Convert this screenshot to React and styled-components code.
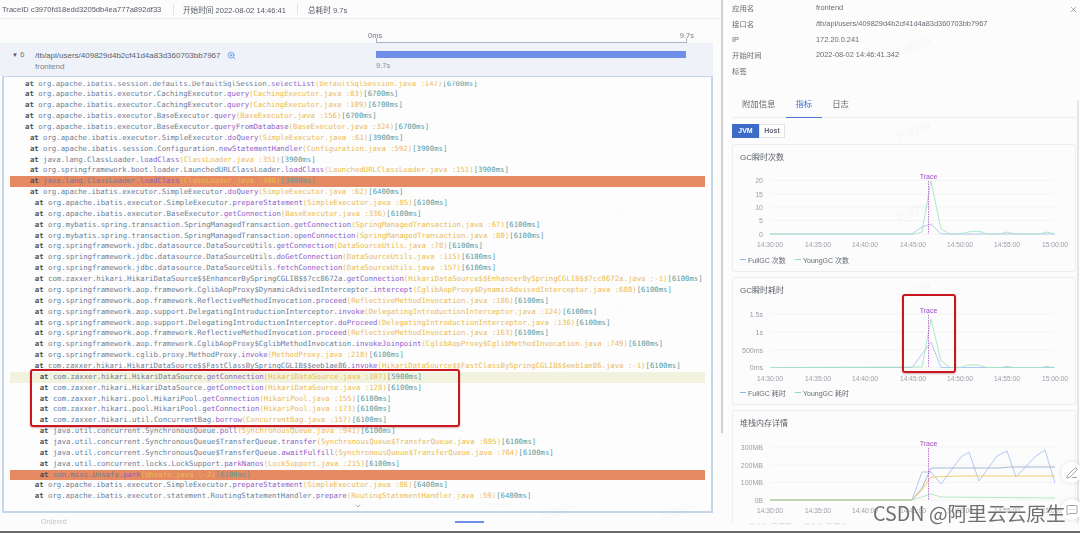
import React from "react";
import styled, { createGlobalStyle } from "styled-components";
import { PenLine, MessageSquareMore, ZoomIn, X, ChevronDown } from "lucide-react";

const UI_FONT = '"Liberation Sans", "Noto Sans CJK SC", sans-serif';

const GlobalStyle = createGlobalStyle`
  html, body {
    margin: 0;
    padding: 0;
    background: #fcfcfc;
    font-family: ${UI_FONT};
    overflow: hidden;
  }
`;

const Screen = styled.div`
  position: relative;
  width: 1080px;
  height: 533px;
  overflow: hidden;
  filter: blur(0.4px);
`;

const Main = styled.div`
  display: flex;
  height: 531px;
  overflow: hidden;
`;

const EdgeBar = styled.div`
  height: 2px;
  background: #6b6b6b;
`;

const Left = styled.div`
  width: 720px;
  flex: none;
  display: flex;
  flex-direction: column;
`;

const TopBar = styled.div`
  height: 18px;
  display: flex;
  align-items: center;
  padding-left: 2px;
  border-bottom: 1px solid #eeeeee;
  font-size: 7.6px;
  color: #555b66;
`;

const TopItem = styled.div`
  width: ${(p) => p.$width}px;
  flex: none;
  white-space: nowrap;
`;

const TopDivider = styled.div`
  width: 1px;
  height: 11px;
  background: #e3e3e3;
  margin-right: ${(p) => p.$gap}px;
  flex: none;
`;

const RulerRow = styled.div`
  height: 24px;
  display: flex;
  justify-content: space-between;
  align-items: center;
  padding: 8px 26px 0 368px;
  box-sizing: border-box;
  font-size: 7.5px;
  color: #777c85;
`;

const SpanRow = styled.div`
  position: relative;
  height: 33px;
  display: flex;
  background: #eff2f8;
  margin-right: 7px;
`;

const RulerLine = styled.div`
  position: absolute;
  left: 375.5px;
  top: -5px;
  width: 311px;
  height: 5px;
  box-sizing: border-box;
  border: 1px solid #a9b2c0;
  border-top: 0;
`;

const SpanInfo = styled.div`
  width: 376px;
  flex: none;
  display: flex;
  padding: 7px 0 0 12px;
  box-sizing: border-box;
`;

const Caret = styled.span`
  font-size: 6px;
  line-height: 10px;
  color: #555;
  width: 8px;
`;

const SpanCount = styled.span`
  width: 15px;
  font-size: 8px;
  line-height: 10px;
  color: #777;
`;

const SpanText = styled.div`
  font-size: 8px;
  line-height: 11px;
  color: #5a6170;
`;

const SpanPath = styled.div`
  display: flex;
  align-items: center;
  gap: 6px;
  white-space: nowrap;
`;

const SpanApp = styled.div`
  color: #80858e;
`;

const SpanBarCol = styled.div`
  padding-top: 8px;
  width: 310px;
`;

const SpanBar = styled.div`
  height: 7px;
  background: #6f8ee8;
`;

const SpanTime = styled.div`
  font-size: 7.5px;
  color: #8b9098;
  margin-top: 3px;
`;

const StackPanel = styled.div`
  position: relative;
  height: 437px;
  margin: 0 7px 0 2px;
  border: 1px solid #c6d5ea;
  border-width: 1px 2px 2px 2px;
  background: #fdfdfd;
  overflow: hidden;
  padding-top: 1.6px;
  box-sizing: border-box;
`;

const Fade = styled.div`
  position: absolute;
  left: 0;
  right: 0;
  height: ${(p) => p.$height}px;
  ${(p) => (p.$top ? "top: 0;" : "bottom: 0;")}
  background: linear-gradient(${(p) => (p.$top ? "to bottom" : "to top")}, #fdfdfd 40%, rgba(253, 253, 253, 0));
`;

const StackRow = styled.div`
  height: 10.87px;
  line-height: 10.87px;
  margin: 0 6px;
  padding-left: ${(p) => 15 + p.$level * 4.9}px;
  font-family: "DejaVu Sans Mono", "Liberation Mono", monospace;
  font-size: 7.3px;
  white-space: nowrap;
  background: ${(p) =>
    p.$mark === "slow" ? "#e58a63" : p.$mark === "focus" ? "#f1f3de" : "transparent"};
`;

const At = styled.span`
  color: #4c4f55;
  font-weight: bold;
`;

const Pkg = styled.span`
  color: #6c7d98;
`;

const Method = styled.span`
  color: #8d5fcb;
`;

const FileRef = styled.span`
  color: #ecbb4f;
`;

const Took = styled.span`
  color: #5a9aa0;
`;

const RedBox = styled.div`
  position: absolute;
  left: ${(p) => p.$left}px;
  top: ${(p) => p.$top}px;
  width: ${(p) => p.$width}px;
  height: ${(p) => p.$height}px;
  box-sizing: border-box;
  border: 2px solid #c9161f;
  border-radius: 3px;
  box-shadow: 0 1px 2px rgba(120, 0, 0, 0.3);
`;

const ScrollDown = styled.div`
  position: absolute;
  left: 354px;
  top: 502px;
  line-height: 0;
  color: #555;
`;

const LeftFoot = styled.div`
  position: relative;
  flex: 1;
  font-size: 7px;
  color: #c4c4c4;
  padding: 5px 0 0 41px;
`;

const FootMark = styled.div`
  position: absolute;
  left: 455px;
  top: 8px;
  width: 29px;
  height: 2px;
  background: #6f8ee8;
`;

const Right = styled.div`
  position: relative;
  flex: 1;
  padding: 0 4px 0 12px;
  min-width: 0;
  overflow: hidden;
`;

const RightFade = styled.div`
  position: absolute;
  left: 0;
  right: 0;
  bottom: 0;
  height: 10px;
  background: linear-gradient(to top, #fcfcfc 60%, rgba(252, 252, 252, 0));
`;

const Thumb = styled.div`
  position: absolute;
  top: ${(p) => p.$top}px;
  left: ${(p) => p.$left}px;
  width: 2px;
  height: ${(p) => p.$height}px;
  background: ${(p) => p.$color};
`;

const CloseButton = styled.div`
  position: absolute;
  right: 2px;
  top: 5px;
  color: #666;
  line-height: 0;
`;

const InfoRow = styled.div`
  display: grid;
  grid-template-columns: 84px 1fr;
  height: 15.7px;
  align-items: center;
  font-size: 7.4px;
  color: #666b74;
`;

const Tabs = styled.div`
  display: flex;
  height: 23px;
  margin-top: 16.5px;
  border-bottom: 1px solid #eeeeee;
  box-sizing: border-box;
`;

const Tab = styled.div`
  height: 23px;
  padding: 0 10px;
  box-sizing: border-box;
  font-size: 8.4px;
  line-height: 19px;
  color: ${(p) => (p.$active ? "#4a74cc" : "#666")};
  border-bottom: ${(p) => (p.$active ? "1px solid #4a74cc" : "0")};
`;

const ToggleGroup = styled.div`
  display: flex;
  margin-top: 6px;
  height: 14px;
`;

const Toggle = styled.div`
  width: ${(p) => p.$width}px;
  box-sizing: border-box;
  display: flex;
  align-items: center;
  justify-content: center;
  font-size: 7px;
  font-weight: bold;
  color: ${(p) => (p.$active ? "#fff" : "#667")};
  background: ${(p) => (p.$active ? "#3c6cc8" : "#fff")};
  border: 1px solid ${(p) => (p.$active ? "#3c6cc8" : "#e4e4e4")};
`;

const Card = styled.div`
  height: 128px;
  margin-top: ${(p) => p.$gap}px;
  box-sizing: border-box;
  border: 1px solid #eeeeee;
  border-radius: 2px;
  padding-top: 7px;
  width: 344px;
  flex: none;
`;

const CardTitle = styled.div`
  height: 12px;
  line-height: 12px;
  padding-left: 7px;
  font-size: 8px;
  color: #5a5f68;
`;

const ChartSvg = styled.svg`
  display: block;
  margin-left: -1px;
  font-family: ${UI_FONT};
`;

const Legend = styled.div`
  display: flex;
  height: 12px;
  align-items: center;
  margin-top: 2px;
  padding-left: 7px;
  font-size: 7px;
  color: #666b74;
`;

const LegendItem = styled.div`
  display: flex;
  align-items: center;
  gap: 2px;
  width: ${(p) => p.$width}px;
  white-space: nowrap;
  &::before {
    content: "";
    width: 6px;
    height: 1px;
    background: ${(p) => p.$color};
  }
`;

const FloatButton = styled.div`
  position: absolute;
  left: ${(p) => p.$left}px;
  top: ${(p) => p.$top}px;
  width: 21px;
  height: 21px;
  border-radius: 50%;
  background: #fff;
  box-shadow: 0 0 4px rgba(0, 0, 0, 0.12);
  display: flex;
  align-items: center;
  justify-content: center;
  color: #666;
`;

const WaterMark = styled.div`
  position: absolute;
  left: 873px;
  top: 500px;
  font-family: "Noto Sans CJK SC", "Noto Sans", sans-serif;
  font-size: 19.7px;
  line-height: 26px;
  color: #707070;
  text-shadow: 0 0 2px #fff;
  white-space: nowrap;
`;

const Tag = styled.div`
  position: absolute;
  font-size: 11px;
  color: rgba(0, 0, 0, 0.035);
  transform: rotate(-20deg);
  pointer-events: none;
`;

const FULL = "#a9c2f5";
const YOUNG = "#a8e4bf";
const X_TICKS = [
  [770, "14:30:00"],
  [818, "14:35:00"],
  [865, "14:40:00"],
  [913, "14:45:00"],
  [960, "14:50:00"],
  [1007, "14:55:00"],
  [1055, "15:00:00"],
];

const FRAME = "org.apache.ibatis.executor.";
const SPRING_JDBC = "org.springframework.jdbc.datasource.DataSourceUtils.";
const AOP = "org.springframework.aop.";
const HIKARI = "com.zaxxer.hikari.";
const CONC = "java.util.concurrent.";

const rows = [
  [0, "org.apache.ibatis.session.defaults.DefaultSqlSession.", "selectList", "DefaultSqlSession.java :147", "6700"],
  [0, FRAME + "CachingExecutor.", "query", "CachingExecutor.java :83", "6700"],
  [0, FRAME + "CachingExecutor.", "query", "CachingExecutor.java :109", "6700"],
  [0, FRAME + "BaseExecutor.", "query", "BaseExecutor.java :156", "6700"],
  [0, FRAME + "BaseExecutor.", "queryFromDatabase", "BaseExecutor.java :324", "6700"],
  [1, FRAME + "SimpleExecutor.", "doQuery", "SimpleExecutor.java :61", "3900"],
  [1, "org.apache.ibatis.session.Configuration.", "newStatementHandler", "Configuration.java :592", "3900"],
  [1, "java.lang.ClassLoader.", "loadClass", "ClassLoader.java :351", "3900"],
  [1, "org.springframework.boot.loader.LaunchedURLClassLoader.", "loadClass", "LaunchedURLClassLoader.java :151", "3900"],
  [1, "java.lang.ClassLoader.", "loadClass", "ClassLoader.java :398", "3900", "slow"],
  [1, FRAME + "SimpleExecutor.", "doQuery", "SimpleExecutor.java :62", "6400"],
  [2, FRAME + "SimpleExecutor.", "prepareStatement", "SimpleExecutor.java :85", "6100"],
  [2, FRAME + "BaseExecutor.", "getConnection", "BaseExecutor.java :336", "6100"],
  [2, "org.mybatis.spring.transaction.SpringManagedTransaction.", "getConnection", "SpringManagedTransaction.java :67", "6100"],
  [2, "org.mybatis.spring.transaction.SpringManagedTransaction.", "openConnection", "SpringManagedTransaction.java :80", "6100"],
  [2, SPRING_JDBC, "getConnection", "DataSourceUtils.java :78", "6100"],
  [2, SPRING_JDBC, "doGetConnection", "DataSourceUtils.java :115", "6100"],
  [2, SPRING_JDBC, "fetchConnection", "DataSourceUtils.java :157", "6100"],
  [2, HIKARI + "HikariDataSource$$EnhancerBySpringCGLIB$$7cc8672a.", "getConnection", "HikariDataSource$$EnhancerBySpringCGLIB$$7cc8672a.java :-1", "6100"],
  [2, AOP + "framework.CglibAopProxy$DynamicAdvisedInterceptor.", "intercept", "CglibAopProxy$DynamicAdvisedInterceptor.java :688", "6100"],
  [2, AOP + "framework.ReflectiveMethodInvocation.", "proceed", "ReflectiveMethodInvocation.java :186", "6100"],
  [2, AOP + "support.DelegatingIntroductionInterceptor.", "invoke", "DelegatingIntroductionInterceptor.java :124", "6100"],
  [2, AOP + "support.DelegatingIntroductionInterceptor.", "doProceed", "DelegatingIntroductionInterceptor.java :136", "6100"],
  [2, AOP + "framework.ReflectiveMethodInvocation.", "proceed", "ReflectiveMethodInvocation.java :163", "6100"],
  [2, AOP + "framework.CglibAopProxy$CglibMethodInvocation.", "invokeJoinpoint", "CglibAopProxy$CglibMethodInvocation.java :749", "6100"],
  [2, "org.springframework.cglib.proxy.MethodProxy.", "invoke", "MethodProxy.java :218", "6100"],
  [2, HIKARI + "HikariDataSource$$FastClassBySpringCGLIB$$eeb1ae86.", "invoke", "HikariDataSource$$FastClassBySpringCGLIB$$eeb1ae86.java :-1", "6100"],
  [3, HIKARI + "HikariDataSource.", "getConnection", "HikariDataSource.java :107", "5900", "focus"],
  [3, HIKARI + "HikariDataSource.", "getConnection", "HikariDataSource.java :128", "6100"],
  [3, HIKARI + "pool.HikariPool.", "getConnection", "HikariPool.java :155", "6100"],
  [3, HIKARI + "pool.HikariPool.", "getConnection", "HikariPool.java :173", "6100"],
  [3, HIKARI + "util.ConcurrentBag.", "borrow", "ConcurrentBag.java :157", "6100"],
  [3, CONC + "SynchronousQueue.", "poll", "SynchronousQueue.java :941", "6100"],
  [3, CONC + "SynchronousQueue$TransferQueue.", "transfer", "SynchronousQueue$TransferQueue.java :695", "6100"],
  [3, CONC + "SynchronousQueue$TransferQueue.", "awaitFulfill", "SynchronousQueue$TransferQueue.java :764", "6100"],
  [3, CONC + "locks.LockSupport.", "parkNanos", "LockSupport.java :215", "6100"],
  [3, "sun.misc.Unsafe.", "park", "Unsafe.java :-2", "6100", "slow"],
  [2, FRAME + "SimpleExecutor.", "prepareStatement", "SimpleExecutor.java :86", "6400"],
  [2, FRAME + "statement.RoutingStatementHandler.", "prepare", "RoutingStatementHandler.java :59", "6400"],
  [2, FRAME + "statement.PreparedStatementHandler.", "prepare", "BaseStatementHandler.java :88", "6200"],
];

const info = [
  ["应用名", "frontend"],
  ["接口名", "/tb/api/users/409829d4b2cf41d4a83d360703bb7967"],
  ["IP", "172.20.0.241"],
  ["开始时间", "2022-08-02 14:46:41.342"],
  ["标签", ""],
];

const charts = [
  {
    title: "GC瞬时次数",
    top: 164,
    gap: 6,
    base: 234,
    traceY: 177,
    yTicks: [[180.5, "20"], [194, "15"], [207, "10"], [220.5, "5"], [234, "0"]],
    series: [
      [FULL, "770,234 912,234 922,227 931,224 941,234 1055,234"],
      [YOUNG, "770,234 915,234 922,232 931,181 941,229 950,234 960,234 968,232 975,231 982,232 987,234 1000,234 1007,232 1014,234 1040,234 1047,232 1055,234"],
    ],
    legend: ["FullGC 次数", "YoungGC 次数"],
  },
  {
    title: "GC瞬时耗时",
    top: 297,
    gap: 5,
    base: 367.5,
    traceY: 311,
    yTicks: [[314, "1.5s"], [332, "1s"], [350, "500ms"], [367.5, "0ms"]],
    series: [
      [FULL, "770,367.5 912,367.5 931,342 941,367.5 1055,367.5"],
      [YOUNG, "770,367.5 922,367 931,319 941,361 950,367.5 960,367.5 968,365 978,365 987,367.5 1000,367.5 1007,366.5 1014,367.5 1040,367.5 1047,366.5 1055,367.5"],
    ],
    legend: ["FullGC 耗时", "YoungGC 耗时"],
  },
  {
    title: "堆栈内存详情",
    top: 430,
    gap: 5,
    base: 500,
    traceY: 444,
    yTicks: [[447, "300MB"], [465, "200MB"], [482.5, "100MB"], [500, "0B"]],
    series: [
      [FULL, "770,500 912,500 922,472 931,472 941,484 961,457 969,452 979,481 997,456 1007,451 1016,477 1036,456 1045,450 1055,483"],
      ["#9fb0cc", "770,500 912,500 922,488 931,468 1000,468 1010,467 1055,467"],
      ["#f0c766", "770,500 912,500 922,490 931,477 960,476 1055,476"],
      [YOUNG, "770,500 912,500 922,497 931,494 941,497 1055,498"],
    ],
    legend: ["堆内存 已使用", "堆内存 已提交"],
  },
];

const tags = [
  [420, 115], [600, 115], [420, 205], [600, 205], [420, 300], [600, 300],
  [420, 395], [600, 395], [540, 505], [660, 505], [895, 40], [895, 125], [895, 205], [895, 285],
];

const Chart = ({ top, base, traceY, yTicks, series }) => (
  <ChartSvg width="344" height="88" viewBox={`732 ${top} 344 88`}>
    {yTicks.map(([y]) => (
      <line key={y} x1="770" x2="1055" y1={y} y2={y} stroke="#f1f1f1" strokeWidth="0.7" />
    ))}
    {yTicks.map(([y, label]) => (
      <text key={label} x="763" y={y + 2.5} fontSize="7" fill="#9a9ea6" textAnchor="end">
        {label}
      </text>
    ))}
    {X_TICKS.map(([x, label]) => (
      <text key={label} x={x} y={base + 13} fontSize="6.7" fill="#9a9ea6" textAnchor="middle">
        {label}
      </text>
    ))}
    {series.map(([color, points]) => (
      <polyline key={color} points={points} fill="none" stroke={color} strokeWidth="0.9" />
    ))}
    <line x1="928.5" x2="928.5" y1={traceY + 4} y2={base} stroke="#a03cc0" strokeWidth="0.7" strokeDasharray="1.5 1" />
    <text x="928.5" y={traceY + 2} fontSize="7" fill="#a14cc0" textAnchor="middle">
      Trace
    </text>
  </ChartSvg>
);

export default function App() {
  return (
    <Screen>
      <GlobalStyle />
      <Main>
        <Left>
          <TopBar>
            <TopItem $width={171}>TraceID c3970fd18edd3205db4ea777a892df33</TopItem>
            <TopDivider $gap={9} />
            <TopItem $width={114}>开始时间 2022-08-02 14:46:41</TopItem>
            <TopDivider $gap={10} />
            <TopItem $width={60}>总耗时 9.7s</TopItem>
          </TopBar>
          <RulerRow>
            <span>0ms</span>
            <span>9.7s</span>
          </RulerRow>
          <SpanRow>
            <RulerLine />
            <SpanInfo>
              <Caret>▼</Caret>
              <SpanCount>6</SpanCount>
              <SpanText>
                <SpanPath>
                  /tb/api/users/409829d4b2cf41d4a83d360703bb7967
                  <ZoomIn size={9} color="#5b8ee6" />
                </SpanPath>
                <SpanApp>frontend</SpanApp>
              </SpanText>
            </SpanInfo>
            <SpanBarCol>
              <SpanBar />
              <SpanTime>9.7s</SpanTime>
            </SpanBarCol>
          </SpanRow>
          <StackPanel>
            {rows.map(([level, pkg, method, file, took, mark], i) => (
              <StackRow key={i} $level={level} $mark={mark}>
                <At>at </At>
                <Pkg>{pkg}</Pkg>
                <Method>{method}</Method>
                <FileRef>({file})</FileRef>
                <Took>[{took}ms]</Took>
              </StackRow>
            ))}
            <Fade $top $height={6} />
            <Fade $height={14} />
          </StackPanel>
          <LeftFoot>
            Ordered
            <FootMark />
          </LeftFoot>
        </Left>
        <Right>
          <Thumb $left={1} $top={0} $height={433} $color="#d0d0d0" />
          <Thumb $left={357} $top={100} $height={431} $color="#e6e6e6" />
          <CloseButton>
            <X size={9} strokeWidth={1.4} />
          </CloseButton>
          {info.map(([label, value]) => (
            <InfoRow key={label}>
              <span>{label}</span>
              <span>{value}</span>
            </InfoRow>
          ))}
          <Tabs>
            <Tab>附加信息</Tab>
            <Tab $active>指标</Tab>
            <Tab>日志</Tab>
          </Tabs>
          <ToggleGroup>
            <Toggle $active $width={27}>JVM</Toggle>
            <Toggle $width={26}>Host</Toggle>
          </ToggleGroup>
          {charts.map((chart) => (
            <Card key={chart.title} $gap={chart.gap}>
              <CardTitle>{chart.title}</CardTitle>
              <Chart {...chart} />
              <Legend>
                <LegendItem $color="#8fb0f0" $width={55}>{chart.legend[0]}</LegendItem>
                <LegendItem $color="#8fdcae" $width={70}>{chart.legend[1]}</LegendItem>
              </Legend>
            </Card>
          ))}
          <RightFade />
        </Right>
      </Main>
      <EdgeBar />
      <RedBox $left={30} $top={369} $width={430} $height={58} />
      <RedBox $left={902} $top={294} $width={54} $height={79} />
      <ScrollDown>
        <ChevronDown size={8} strokeWidth={1.4} />
      </ScrollDown>
      {tags.map(([x, y]) => (
        <Tag key={`${x}-${y}`} style={{ left: x, top: y }}>259924</Tag>
      ))}
      <FloatButton $left={1061} $top={462}>
        <PenLine size={12} strokeWidth={1.2} />
      </FloatButton>
      <FloatButton $left={1061} $top={499}>
        <MessageSquareMore size={12} strokeWidth={1.2} />
      </FloatButton>
      <WaterMark>CSDN @阿里云云原生</WaterMark>
    </Screen>
  );
}
